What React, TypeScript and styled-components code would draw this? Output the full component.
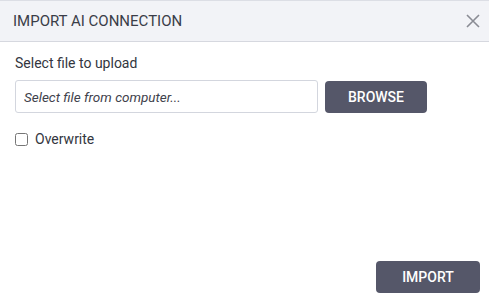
import styled, { createGlobalStyle } from 'styled-components';

const GlobalStyle = createGlobalStyle`
  html, body {
    margin: 0;
    padding: 0;
    background: #ffffff;
  }
  body {
    font-family: Roboto, 'Liberation Sans', sans-serif;
    color: #333640;
  }
`;

const Dialog = styled.div`
  width: 489px;
  height: 302px;
  display: flex;
  flex-direction: column;
  box-sizing: border-box;
  background: #ffffff;
`;

const Header = styled.div`
  height: 42px;
  box-sizing: border-box;
  display: flex;
  align-items: center;
  justify-content: space-between;
  padding: 0 4px 0 13px;
  background: #f2f3f7;
  border-top: 1px solid #dcdee5;
  border-bottom: 1px solid #d6d8df;
`;

const Title = styled.h2`
  margin: 0;
  font-size: 15px;
  font-weight: 400;
  color: #3a3d48;
`;

const CloseButton = styled.button`
  width: 24px;
  height: 24px;
  padding: 0;
  border: none;
  background: transparent;
  display: flex;
  align-items: center;
  justify-content: center;
  cursor: pointer;
`;

const Body = styled.div`
  flex: 1;
  display: flex;
  flex-direction: column;
  padding: 12px 15px 0 15px;
`;

const Label = styled.div`
  font-size: 14px;
  color: #333640;
  line-height: 18px;
`;

const UploadRow = styled.div`
  display: flex;
  align-items: center;
  gap: 7px;
  margin-top: 8px;
`;

const FileInput = styled.input`
  width: 303px;
  height: 33px;
  box-sizing: border-box;
  border: 1px solid #d3d6de;
  border-radius: 3px;
  padding: 0 8px;
  font-family: Roboto, 'Liberation Sans', sans-serif;
  font-size: 13.5px;
  outline: none;

  &::placeholder {
    font-style: italic;
    color: #3f424c;
  }
`;

const ActionButton = styled.button<{ $width: number }>`
  width: ${(props) => props.$width}px;
  height: 32px;
  border: none;
  border-radius: 4px;
  background: #555769;
  color: #ffffff;
  font-family: Roboto, 'Liberation Sans', sans-serif;
  font-size: 14px;
  font-weight: 500;
  text-transform: uppercase;
  cursor: pointer;
`;

const CheckRow = styled.label`
  display: flex;
  align-items: center;
  gap: 7px;
  margin-top: 18px;
  font-size: 14px;
  color: #333640;
`;

const Checkbox = styled.input`
  width: 13px;
  height: 13px;
  margin: 0;
`;

const Footer = styled.div`
  display: flex;
  justify-content: flex-end;
  padding: 0 9px 9px 0;
`;

export default function App() {
  return (
    <>
      <GlobalStyle />
      <Dialog>
        <Header>
          <Title>IMPORT AI CONNECTION</Title>
          <CloseButton aria-label='Close'>
            <svg width='14' height='14' viewBox='0 0 14 14'>
              <path d='M1 1 L13 13 M13 1 L1 13' stroke='#8a8c94' strokeWidth='1.6' />
            </svg>
          </CloseButton>
        </Header>
        <Body>
          <Label>Select file to upload</Label>
          <UploadRow>
            <FileInput type='text' placeholder='Select file from computer...' readOnly />
            <ActionButton $width={102}>Browse</ActionButton>
          </UploadRow>
          <CheckRow>
            <Checkbox type='checkbox' />
            Overwrite
          </CheckRow>
        </Body>
        <Footer>
          <ActionButton $width={104}>Import</ActionButton>
        </Footer>
      </Dialog>
    </>
  );
}
